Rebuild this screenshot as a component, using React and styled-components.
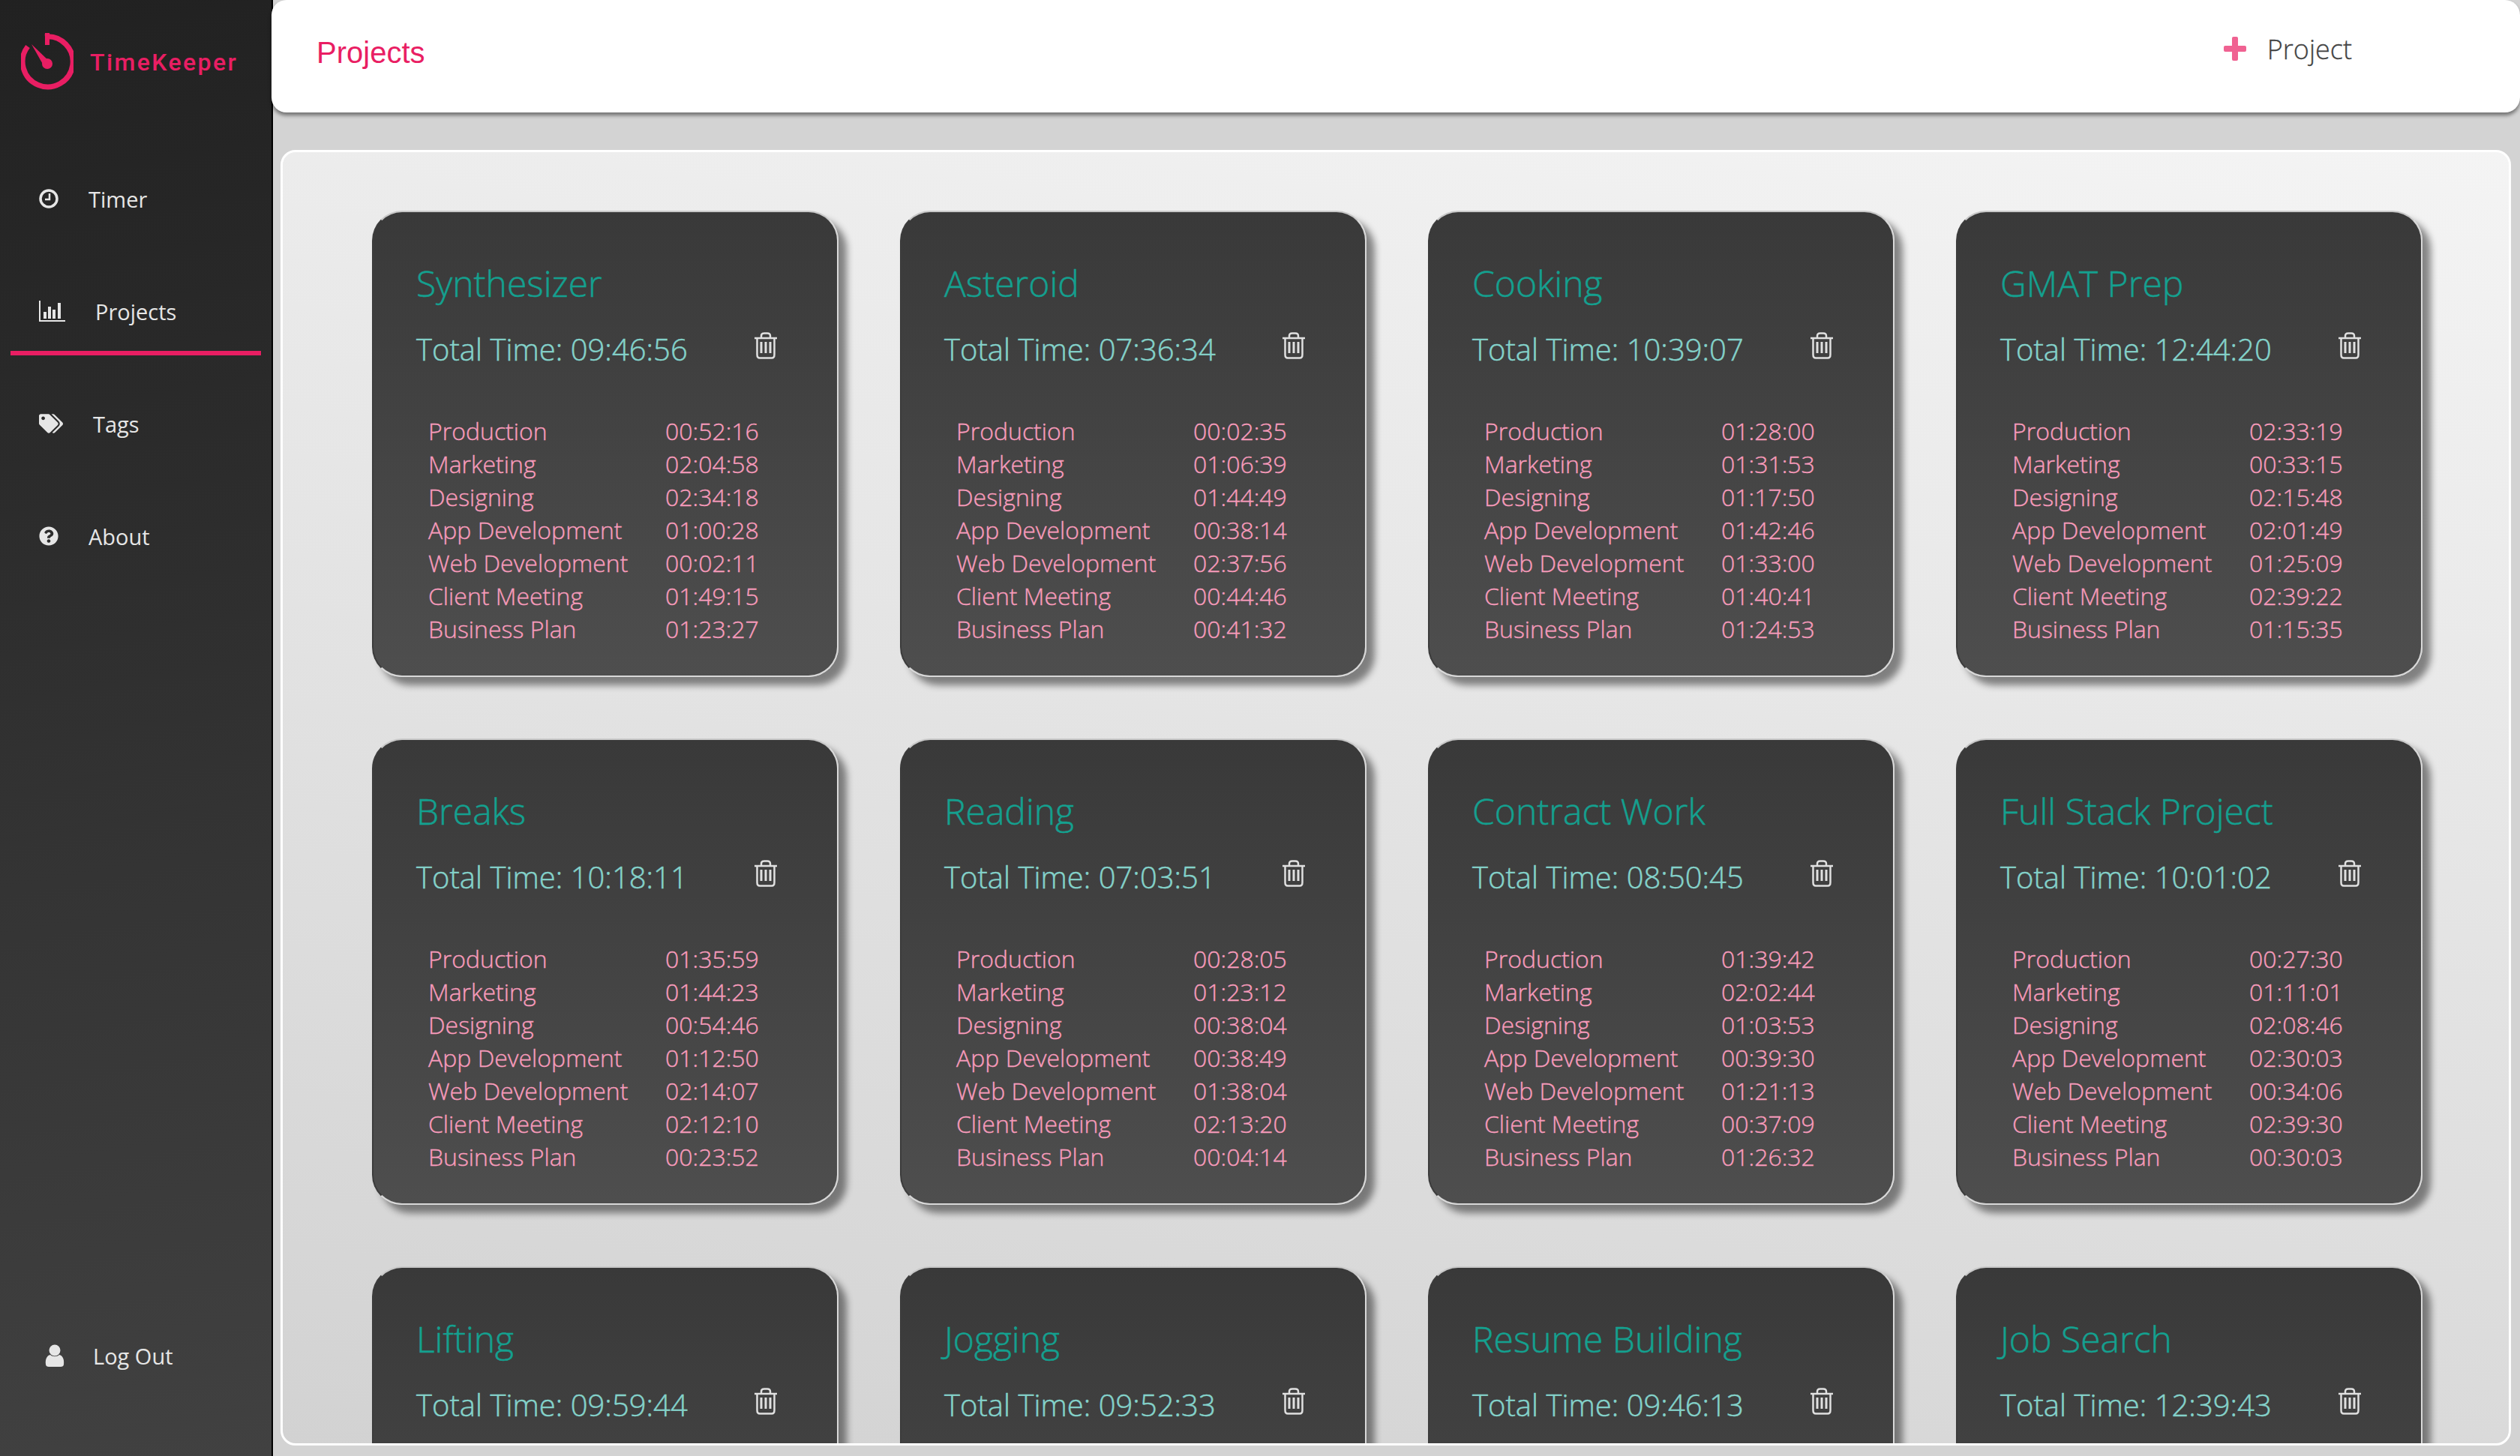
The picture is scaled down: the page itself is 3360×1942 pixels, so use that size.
import React from 'react'
import styled, { createGlobalStyle } from 'styled-components'
import { FaTags, FaQuestionCircle } from 'react-icons/fa'

const LABELS = ['Production', 'Marketing', 'Designing', 'App Development', 'Web Development', 'Client Meeting', 'Business Plan']

const PROJECTS = [
  { name: 'Synthesizer', total: '09:46:56', times: ['00:52:16', '02:04:58', '02:34:18', '01:00:28', '00:02:11', '01:49:15', '01:23:27'] },
  { name: 'Asteroid', total: '07:36:34', times: ['00:02:35', '01:06:39', '01:44:49', '00:38:14', '02:37:56', '00:44:46', '00:41:32'] },
  { name: 'Cooking', total: '10:39:07', times: ['01:28:00', '01:31:53', '01:17:50', '01:42:46', '01:33:00', '01:40:41', '01:24:53'] },
  { name: 'GMAT Prep', total: '12:44:20', times: ['02:33:19', '00:33:15', '02:15:48', '02:01:49', '01:25:09', '02:39:22', '01:15:35'] },
  { name: 'Breaks', total: '10:18:11', times: ['01:35:59', '01:44:23', '00:54:46', '01:12:50', '02:14:07', '02:12:10', '00:23:52'] },
  { name: 'Reading', total: '07:03:51', times: ['00:28:05', '01:23:12', '00:38:04', '00:38:49', '01:38:04', '02:13:20', '00:04:14'] },
  { name: 'Contract Work', total: '08:50:45', times: ['01:39:42', '02:02:44', '01:03:53', '00:39:30', '01:21:13', '00:37:09', '01:26:32'] },
  { name: 'Full Stack Project', total: '10:01:02', times: ['00:27:30', '01:11:01', '02:08:46', '02:30:03', '00:34:06', '02:39:30', '00:30:03'] },
  { name: 'Lifting', total: '09:59:44', times: [] },
  { name: 'Jogging', total: '09:52:33', times: [] },
  { name: 'Resume Building', total: '09:46:13', times: [] },
  { name: 'Job Search', total: '12:39:43', times: [] },
]

const GlobalStyle = createGlobalStyle`
  html, body {
    margin: 0;
    height: 100%;
    overflow: hidden;
    background: #d3d3d3;
    font-family: 'Open Sans', sans-serif;
  }
  * { box-sizing: border-box; }
`

const Page = styled.div`
  display: flex;
  width: 3360px;
  height: 1942px;
  overflow: hidden;
`

const Sidebar = styled.aside`
  flex: 0 0 364px;
  display: flex;
  flex-direction: column;
  border-right: 2px solid #000;
  background: linear-gradient(170deg, #212121 0%, #414141 100%);
`

const Brand = styled.div`
  display: flex;
  align-items: center;
  gap: 22px;
  height: 190px;
  padding: 0 0 25px 28px;
  color: #e91e63;
  svg { display: block; }
`

const BrandName = styled.span`
  font-family: Roboto, sans-serif;
  font-size: 32px;
  font-weight: 500;
  letter-spacing: 2.4px;
`

const Nav = styled.nav`
  display: flex;
  flex-direction: column;
  flex: 1;
`

const NavItem = styled.a`
  display: flex;
  align-items: center;
  gap: ${p => p.$gap}px;
  height: 134px;
  margin: 0 14px 16px;
  padding: 22px 0 0 ${p => p.$left}px;
  border-bottom: 6px solid ${p => (p.$active ? '#e91e63' : 'transparent')};
  color: #e6e6e6;
  font-size: 29px;
  font-weight: 400;
  svg { display: block; flex: none; }
`

const Logout = styled(NavItem)`
  margin-top: auto;
  margin-bottom: 75px;
`

const Main = styled.main`
  flex: 1;
  display: flex;
  flex-direction: column;
  min-width: 0;
`

const Header = styled.header`
  flex: 0 0 150px;
  display: flex;
  align-items: center;
  justify-content: space-between;
  padding: 0 224px 20px 60px;
  background: #fff;
  border-radius: 20px;
  box-shadow: 0 4px 5px rgba(0, 0, 0, 0.45);
  margin-left: -2px;
`

const PageTitle = styled.h1`
  margin: 10px 0 0;
  color: #e91e63;
  font-family: 'Liberation Sans', sans-serif;
  font-size: 40px;
  font-weight: 400;
`

const AddButton = styled.button`
  display: flex;
  align-items: center;
  gap: 28px;
  border: 0;
  padding: 0;
  background: none;
  color: #444;
  font-family: 'Open Sans', sans-serif;
  font-size: 36px;
  font-weight: 300;
  -webkit-text-stroke: 0.3px #444;
  svg { display: block; }
`

const Panel = styled.section`
  flex: 1;
  min-height: 0;
  margin: 50px 12px 14px 10px;
  padding: 78px 0 0 119px;
  overflow: hidden;
  border: 3px solid #fff;
  border-radius: 20px;
  background: linear-gradient(190deg, #f4f4f4 0%, #d2d2d2 100%);
`

const Grid = styled.div`
  display: grid;
  grid-template-columns: repeat(4, 622px);
  grid-auto-rows: 622px;
  gap: 82px;
`

const Card = styled.article`
  padding: 60px 79px 0 57px;
  border-radius: 40px;
  border: 2px solid #d8d8d8;
  border-left-color: #3c3c3c;
  border-top-color: #c8c8c8;
  background: linear-gradient(180deg, #393939 0%, #4e4e4e 100%);
  box-shadow: 11px 11px 10px rgba(0, 0, 0, 0.45);
`

const CardTitle = styled.h2`
  margin: 0;
  color: #14a08f;
  font-size: 48px;
  font-weight: 300;
  line-height: 70px;
  -webkit-text-stroke: 0.5px #14a08f;
`

const TotalRow = styled.div`
  display: flex;
  justify-content: space-between;
  align-items: flex-start;
  margin-top: 25px;
`

const Total = styled.span`
  color: #84d2ca;
  font-size: 40px;
  font-weight: 300;
  line-height: 56px;
  -webkit-text-stroke: 0.5px #84d2ca;
`

const TrashButton = styled.span`
  display: block;
  margin-top: 5px;
  color: #e0e0e0;
  svg { display: block; }
`

const Rows = styled.div`
  margin-top: 59px;
  padding-left: 16px;
`

const Row = styled.div`
  display: grid;
  grid-template-columns: 316px auto;
  color: #f79bbb;
  font-size: 32px;
  font-weight: 300;
  line-height: 44px;
  white-space: nowrap;
  -webkit-text-stroke: 0.4px #f79bbb;
`

function LogoIcon() {
  return (
    <svg width="70" height="80" viewBox="0 0 70 80" fill="none">
      <path d="M32 6 A33.500 33.500 0 1 1 9 19" stroke="currentColor" strokeWidth="7" />
      <path d="M32 1 h6 v16 h-6 z" fill="currentColor" />
      <path d="M14 16 L39 40 L31 46 Z" fill="currentColor" />
      <circle cx="35" cy="42" r="7" fill="currentColor" />
    </svg>
  )
}

function ClockIcon() {
  return (
    <svg width="26" height="30" viewBox="0 0 26 30" fill="none" stroke="currentColor">
      <circle cx="13" cy="15" r="11" strokeWidth="3.500" />
      <path d="M14 8 V16 H8" strokeWidth="2.500" />
    </svg>
  )
}

function ChartIcon() {
  return (
    <svg width="36" height="28" viewBox="0 0 36 28" fill="none">
      <path d="M1 0 V27 H35" stroke="currentColor" strokeWidth="2" />
      <path d="M6 15 h4 v9 h-4 z M12 8 h4 v16 h-4 z M18 12 h4 v12 h-4 z M25 3 h4 v21 h-4 z" fill="currentColor" />
    </svg>
  )
}

function UserIcon() {
  return (
    <svg width="26" height="30" viewBox="0 0 26 30" fill="currentColor">
      <circle cx="13" cy="8" r="7.500" />
      <path d="M1 27 C0 19 3 15 7 14 C10 17 16 17 19 14 C23 15 26 19 25 27 C25 29 23 30 21 30 H5 C3 30 1 29 1 27 Z" />
    </svg>
  )
}

function PlusIcon() {
  return (
    <svg width="30" height="32" viewBox="0 0 30 32" fill="#f06292">
      <rect x="11" y="0" width="8" height="32" rx="2" />
      <rect x="0" y="12" width="30" height="8" rx="2" />
    </svg>
  )
}

function TrashIcon() {
  return (
    <svg width="32" height="36" viewBox="0 0 32 36" fill="none" stroke="currentColor" strokeWidth="2.500">
      <path d="M1 8 H31" />
      <path d="M10 8 V5 C10 2 12 1.500 14 1.500 H18 C20 1.500 22 2 22 5 V8" />
      <path d="M4.500 8 V30 C4.500 33 6 34.500 8 34.500 H24 C26 34.500 27.500 33 27.500 30 V8" />
      <path d="M10 13 V28 M16 13 V28 M22 13 V28" strokeWidth="3" />
    </svg>
  )
}

function ProjectCard({ project }) {
  return (
    <Card>
      <CardTitle>{project.name}</CardTitle>
      <TotalRow>
        <Total>Total Time: {project.total}</Total>
        <TrashButton><TrashIcon /></TrashButton>
      </TotalRow>
      <Rows>
        {project.times.map((time, i) => (
          <Row key={LABELS[i]}>
            <span>{LABELS[i]}</span>
            <span>{time}</span>
          </Row>
        ))}
      </Rows>
    </Card>
  )
}

export default function App() {
  return (
    <Page>
      <GlobalStyle />
      <Sidebar>
        <Brand>
          <LogoIcon />
          <BrandName>TimeKeeper</BrandName>
        </Brand>
        <Nav>
          <NavItem $left={38} $gap={40}><ClockIcon />Timer</NavItem>
          <NavItem $left={38} $gap={39} $active><ChartIcon />Projects</NavItem>
          <NavItem $left={38} $gap={40}><FaTags size={32} />Tags</NavItem>
          <NavItem $left={38} $gap={40}><FaQuestionCircle size={26} />About</NavItem>
          <Logout $left={46} $gap={38}><UserIcon />Log Out</Logout>
        </Nav>
      </Sidebar>
      <Main>
        <Header>
          <PageTitle>Projects</PageTitle>
          <AddButton><PlusIcon />Project</AddButton>
        </Header>
        <Panel>
          <Grid>
            {PROJECTS.map(project => <ProjectCard key={project.name} project={project} />)}
          </Grid>
        </Panel>
      </Main>
    </Page>
  )
}
